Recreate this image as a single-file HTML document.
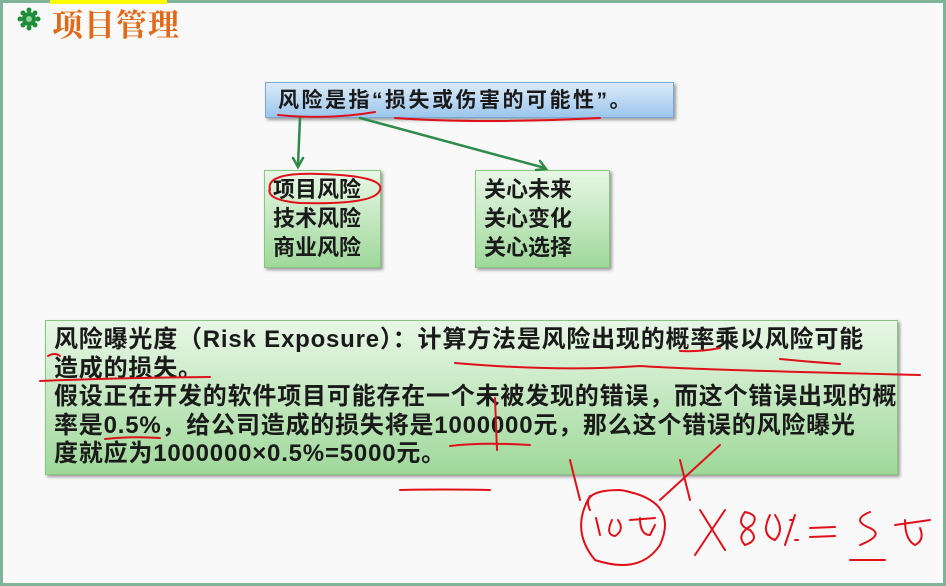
<!DOCTYPE html>
<html><head><meta charset="utf-8"><style>
html,body{margin:0;padding:0}
body{width:946px;height:586px;position:relative;overflow:hidden;background:#7fb498;font-family:"Liberation Sans","Noto Sans CJK SC",sans-serif}
#pg{position:absolute;left:3px;top:3px;width:940px;height:580px;background:#f8f9f8}
#yb{position:absolute;left:50px;top:0;width:117px;height:4px;background:#ffff00}
.t{position:absolute;left:52px;top:0px;font-family:"Noto Serif CJK SC",serif;font-size:31px;color:#e06a1a;font-weight:bold;letter-spacing:1px}
.b{position:absolute;font-weight:bold;color:#1a1a1a;font-size:21px}
#b1{left:265px;top:82px;width:409px;height:36px;background:linear-gradient(#dbeaf8,#9cc6ec);border:1px solid #7aa9d6;box-shadow:2px 2px 3px #999;line-height:36px;padding-left:12px;box-sizing:border-box;letter-spacing:2.5px}
.g{background:linear-gradient(#e8f7e6,#9fd89a);border:1px solid #86c680;box-shadow:2px 2px 3px #999;line-height:29px;box-sizing:border-box;padding:4px 0 0 8px;font-size:22px}
#b2{left:264px;top:170px;width:117px;height:98px}
#b3{left:475px;top:170px;width:135px;height:98px}
#b4{left:45px;top:320px;width:853px;height:155px;line-height:28.5px;padding:5px 0 0 8px;font-size:24px;letter-spacing:0.8px;white-space:nowrap}
svg{position:absolute;left:0;top:0}
</style></head><body>
<div id="pg"></div><div id="yb"></div>
<svg width="946" height="586"><g fill="#1e8c3a"><circle cx="29" cy="19" r="7"/><circle cx="29" cy="10" r="2.5"/><circle cx="29" cy="28" r="2.5"/><circle cx="20" cy="19" r="2.5"/><circle cx="38" cy="19" r="2.5"/><circle cx="23" cy="13" r="2.5"/><circle cx="35" cy="13" r="2.5"/><circle cx="23" cy="25" r="2.5"/><circle cx="35" cy="25" r="2.5"/></g><circle cx="29" cy="19" r="3" fill="#8fd39a"/></svg>
<div class="t">项目管理</div>
<div id="b1" class="b">风险是指“损失或伤害的可能性”。</div>
<div id="b2" class="b g">项目风险<br>技术风险<br>商业风险</div>
<div id="b3" class="b g">关心未来<br>关心变化<br>关心选择</div>
<div id="b4" class="b g">风险曝光度（Risk Exposure）：计算方法是风险出现的概率乘以风险可能<br>造成的损失。<br>假设正在开发的软件项目可能存在一个未被发现的错误，而这个错误出现的概<br>率是0.5%，给公司造成的损失将是1000000元，那么这个错误的风险曝光<br>度就应为1000000×0.5%=5000元。</div>
<svg width="946" height="586" fill="none" stroke-linecap="round">
<g stroke="#2e8b4a" stroke-width="2.5"><path d="M300 118 L298 165"/><path d="M293 158 L298 167 L303 158"/><path d="M360 118 L545 168"/><path d="M536 170 L546 169 L540 161"/></g>
<g stroke="#e0101a" stroke-width="2">
<path d="M278 115 Q330 120 375 112"/><path d="M395 118 Q480 124 600 118"/>
<path d="M270 190 Q265 172 320 174 Q385 176 380 190 Q375 205 300 203 Q265 200 270 188"/>
<path d="M48 356 Q55 352 60 356"/><path d="M40 381 Q110 378 210 377"/>
<path d="M455 363 Q560 372 640 366 Q700 370 920 375"/>
<path d="M680 351 Q700 352 720 348"/><path d="M780 359 Q810 362 840 364"/>
<path d="M105 439 Q130 436 160 438"/><path d="M450 446 Q480 442 530 445"/>
<path d="M400 490 Q440 489 490 490"/>
<path d="M495 398 L497 450"/><path d="M570 460 L580 500"/><path d="M680 460 L690 500"/>
<path d="M660 500 L720 445"/>
<path d="M590 496 Q570 530 595 560 Q640 575 660 545 Q680 500 620 490 Q580 490 590 510"/>
<path d="M596 518 L600 535"/><path d="M612 520 Q605 535 615 536 Q625 530 618 520"/><path d="M630 520 L655 518 M640 518 Q640 535 650 535 L655 525"/>
<path d="M700 510 L725 550 M725 510 L695 555"/>
<path d="M745 512 Q735 525 750 530 Q760 540 745 545 Q735 535 752 525 Q760 515 745 512"/>
<path d="M770 515 Q760 535 775 540 Q785 530 775 515"/><path d="M795 515 L785 545"/><path d="M790 520 L793 520 M795 540 L798 540"/>
<path d="M810 528 L835 527 M810 537 L835 536"/>
<path d="M870 512 Q850 520 870 528 Q885 535 860 545"/><path d="M850 560 L885 560"/>
<path d="M895 525 L930 520 M905 520 Q905 540 915 545 Q925 540 920 528"/>
</g></svg>
</body></html>
